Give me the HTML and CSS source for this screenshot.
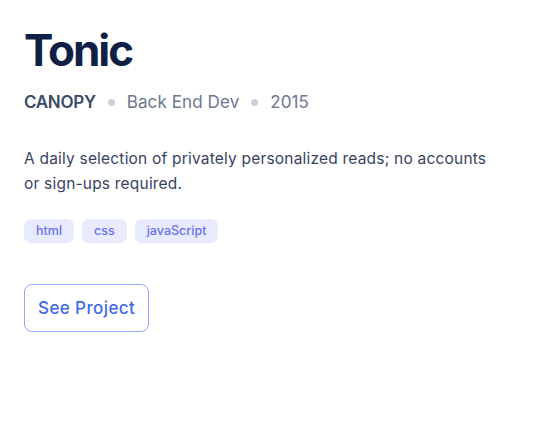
FILE: index.html
```html
<!DOCTYPE html>
<html lang="en">
<head>
<meta charset="utf-8">
<title>Tonic</title>
<link rel="stylesheet" href="styles.css">
</head>
<body>
<main class="card">
  <h1 class="title">Tonic</h1>
  <div class="meta">
    <span class="client">CANOPY</span>
    <span class="dot"></span>
    <span class="info">Back End Dev</span>
    <span class="dot"></span>
    <span class="info">2015</span>
  </div>
  <p class="desc">A daily selection of privately personalized reads; no accounts or sign-ups required.</p>
  <ul class="tags">
    <li class="tag">html</li>
    <li class="tag">css</li>
    <li class="tag">javaScript</li>
  </ul>
  <a class="btn" href="#">See Project</a>
</main>
</body>
</html>
```
FILE: styles.css
```css
* { box-sizing: border-box; }
html, body { margin: 0; background: #fff; }
body {
  font-family: Inter, "Noto Sans", sans-serif;
  color: #334155;
}
.card {
  padding: 24px 24px;
  display: flex;
  flex-direction: column;
  align-items: flex-start;
}
.title {
  margin: 0;
  font-size: 44px;
  line-height: 52px;
  font-weight: 700;
  color: #0f1f45;
  letter-spacing: -2px;
}
.meta {
  margin-top: 14px;
  display: flex;
  align-items: center;
  gap: 12px;
  font-size: 17px;
  line-height: 24px;
}
.client { font-weight: 600; color: #3b4a66; letter-spacing: -0.3px; }
.info { color: #6b7690; letter-spacing: 0.1px; }
.dot { width: 7px; height: 7px; border-radius: 50%; background: #cbd1dc; }
.desc {
  margin: 32px 0 0;
  max-width: 480px;
  font-size: 15.5px;
  line-height: 25px;
  color: #36435f;
  letter-spacing: 0.2px;
}
.tags {
  list-style: none;
  margin: 23px 0 0;
  padding: 0;
  display: flex;
  gap: 8px;
}
.tag {
  background: #e8eafe;
  color: #6a6ff0;
  font-size: 12.5px;
  font-weight: 500;
  line-height: 24px;
  padding: 0 12px;
  border-radius: 7px;
}
.btn {
  margin-top: 41px;
  display: inline-block;
  border: 1px solid #9aa6fb;
  border-radius: 8px;
  padding: 0 13px;
  height: 48px;
  line-height: 46px;
  font-size: 17px;
  font-weight: 500;
  letter-spacing: 0.4px;
  color: #3e6ae6;
  text-decoration: none;
}
```
